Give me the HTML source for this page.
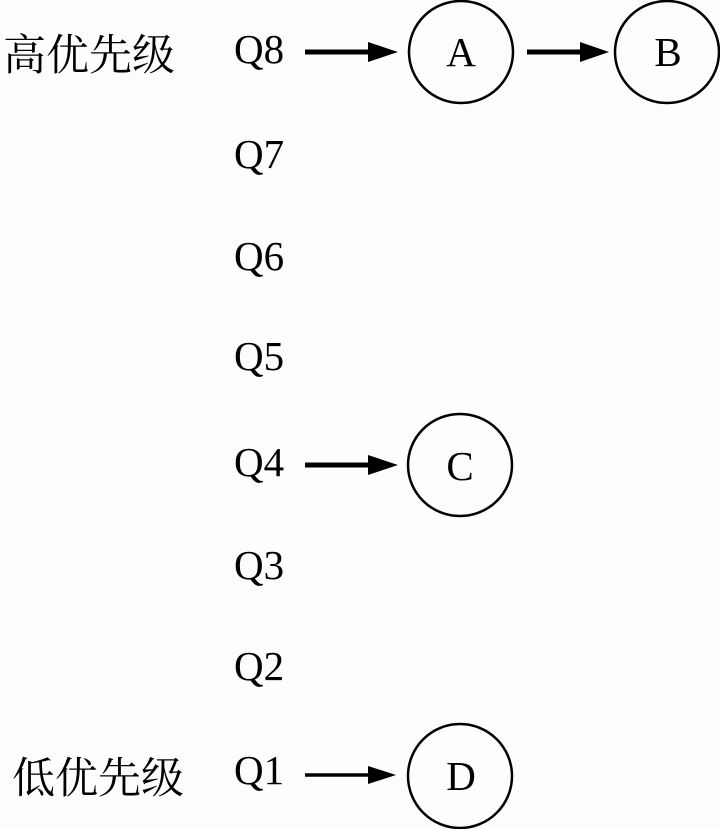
<!DOCTYPE html>
<html><head><meta charset="utf-8"><style>
html,body{margin:0;padding:0;background:#fdfdfd;}
svg{display:block}
text{font-family:"Liberation Serif","Noto Serif CJK SC",serif;fill:#000}
</style></head><body>
<svg width="720" height="829" viewBox="0 0 720 829">
<text x="3" y="70" font-size="43" font-family="Noto Serif CJK SC, serif">高优先级</text>
<text x="12" y="793" font-size="43" font-family="Noto Serif CJK SC, serif">低优先级</text>
<g font-size="41">
<text x="234" y="63">Q8</text>
<text x="234" y="168">Q7</text>
<text x="234" y="270">Q6</text>
<text x="234" y="370">Q5</text>
<text x="234" y="476">Q4</text>
<text x="234" y="579">Q3</text>
<text x="234" y="680">Q2</text>
<text x="234" y="784">Q1</text>
</g>
<g fill="none" stroke="#000" stroke-width="2.5">
<ellipse cx="461" cy="52" rx="52" ry="51"/>
<ellipse cx="667" cy="52" rx="52" ry="51"/>
<ellipse cx="460" cy="465" rx="52" ry="51"/>
<ellipse cx="460" cy="776" rx="52" ry="52"/>
</g>
<g stroke="#000" stroke-width="5">
<line x1="305" y1="52" x2="372" y2="52"/>
<line x1="527" y1="52" x2="584" y2="52"/>
<line x1="305" y1="465" x2="372" y2="465"/>
<line x1="305" y1="775" x2="372" y2="775" stroke-width="3.5"/>
</g>
<g fill="#000">
<path d="M368,42 L398,52 L368,62Z"/>
<path d="M580,42 L609,52 L580,62Z"/>
<path d="M368,455 L398,465 L368,475Z"/>
<path d="M368,766 L396,775 L368,784Z"/>
</g>
<g font-size="41" text-anchor="middle">
<text x="461" y="66">A</text>
<text x="668" y="66">B</text>
<text x="460" y="480">C</text>
<text x="461" y="790">D</text>
</g>
</svg>
</body></html>
